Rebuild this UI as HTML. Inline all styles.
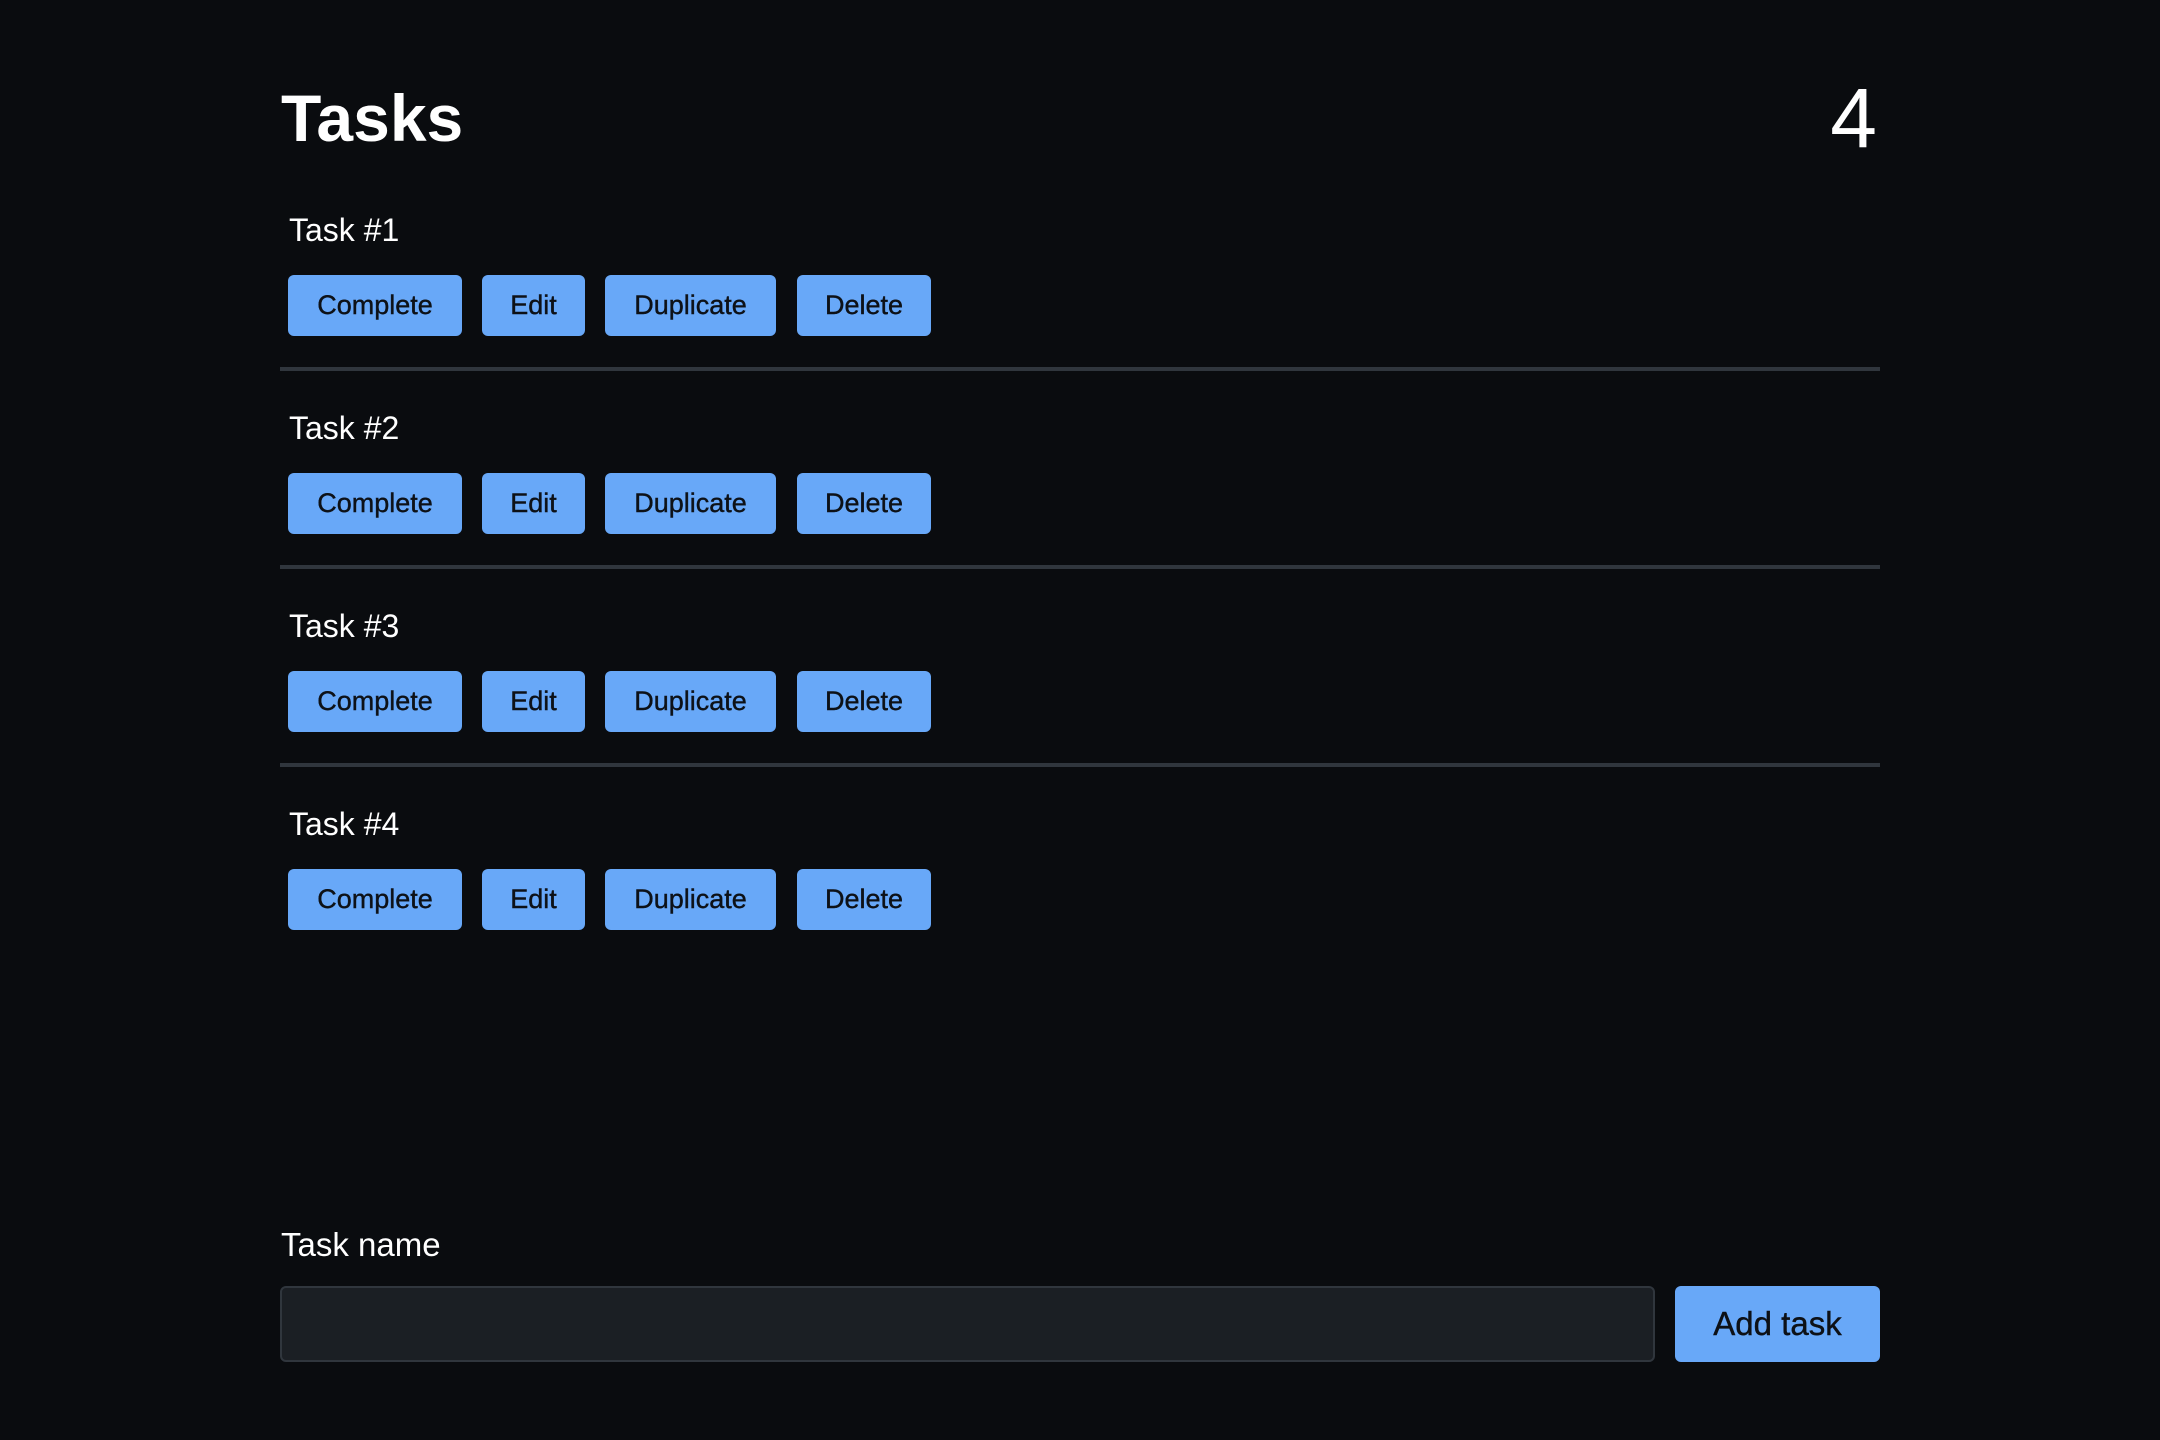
<!DOCTYPE html>
<html><head><style>
*{margin:0;padding:0;box-sizing:border-box}
body{width:2160px;height:1440px;background:#0a0c0f;font-family:"Liberation Sans",sans-serif;color:#fff;position:relative;overflow:hidden}
.abs{position:absolute}
h1{position:absolute;left:281px;top:78px;font-size:66px;font-weight:bold;line-height:80px}
.count{position:absolute;right:283px;top:70px;font-size:84px;line-height:96px}
.task{position:absolute;left:289px;font-size:32px;line-height:40px}
.btn{position:absolute;height:61px;background:#68a8f8;color:#0d1117;border-radius:6px;font-size:27px;line-height:61px;text-align:center;-webkit-text-stroke:0.4px #0d1117}
.hr{position:absolute;left:280px;width:1600px;height:4px;background:#30363d}
</style></head><body>
<h1>Tasks</h1>
<div class="count">4</div>

<div class="task" style="top:210px">Task #1</div>
<div class="btn" style="left:288px;top:275px;width:174px">Complete</div>
<div class="btn" style="left:482px;top:275px;width:103px">Edit</div>
<div class="btn" style="left:605px;top:275px;width:171px">Duplicate</div>
<div class="btn" style="left:797px;top:275px;width:134px">Delete</div>
<div class="hr" style="top:367px"></div>

<div class="task" style="top:408px">Task #2</div>
<div class="btn" style="left:288px;top:473px;width:174px">Complete</div>
<div class="btn" style="left:482px;top:473px;width:103px">Edit</div>
<div class="btn" style="left:605px;top:473px;width:171px">Duplicate</div>
<div class="btn" style="left:797px;top:473px;width:134px">Delete</div>
<div class="hr" style="top:565px"></div>

<div class="task" style="top:606px">Task #3</div>
<div class="btn" style="left:288px;top:671px;width:174px">Complete</div>
<div class="btn" style="left:482px;top:671px;width:103px">Edit</div>
<div class="btn" style="left:605px;top:671px;width:171px">Duplicate</div>
<div class="btn" style="left:797px;top:671px;width:134px">Delete</div>
<div class="hr" style="top:763px"></div>

<div class="task" style="top:804px">Task #4</div>
<div class="btn" style="left:288px;top:869px;width:174px">Complete</div>
<div class="btn" style="left:482px;top:869px;width:103px">Edit</div>
<div class="btn" style="left:605px;top:869px;width:171px">Duplicate</div>
<div class="btn" style="left:797px;top:869px;width:134px">Delete</div>

<div class="abs" style="left:281px;top:1225px;font-size:33px;line-height:40px">Task name</div>
<div class="abs" style="left:280px;top:1286px;width:1375px;height:76px;background:#1b1f24;border:2px solid #30363d;border-radius:6px"></div>
<div class="btn" style="left:1675px;top:1286px;width:205px;height:76px;line-height:76px;font-size:33px">Add task</div>
</body></html>
